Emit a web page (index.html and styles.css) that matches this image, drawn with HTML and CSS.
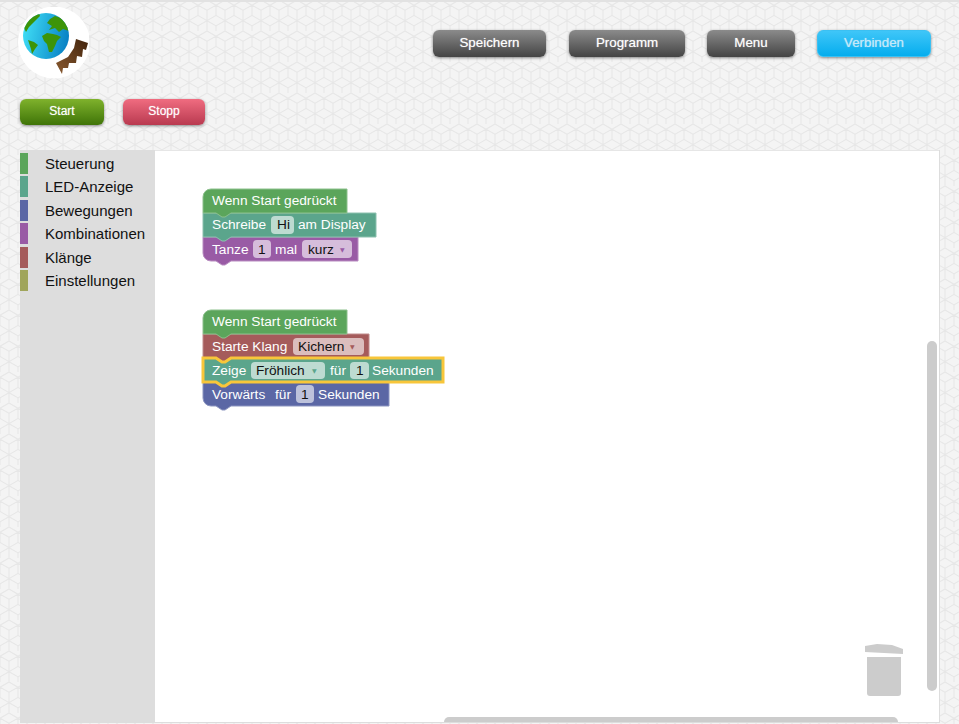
FILE: index.html
```html
<!DOCTYPE html>
<html lang="de">
<head>
    <meta charset="UTF-8">
    <meta name="viewport" content="width=device-width, initial-scale=1.0">
    <title>Blockly Programm</title>
    <link rel="stylesheet" href="styles.css">
</head>
<body>
<header class="top-bar">
    <div class="logo">
        <svg width="72" height="72" viewBox="0 0 72 72">
            <defs>
                <linearGradient id="globeFill" x1="0" y1="0.4" x2="1" y2="0.6">
                    <stop offset="0" stop-color="#3fdcf5"/>
                    <stop offset="1" stop-color="#0780c4"/>
                </linearGradient>
                <linearGradient id="gearFill" x1="0" y1="1" x2="1" y2="0">
                    <stop offset="0" stop-color="#8a5a30"/>
                    <stop offset="1" stop-color="#41230c"/>
                </linearGradient>
                <clipPath id="globeClip"><circle cx="29" cy="29" r="23"/></clipPath>
            </defs>
            <circle cx="37" cy="35.5" r="36" fill="#fff"/>
            <circle cx="29" cy="29" r="23" fill="url(#globeFill)"/>
            <g clip-path="url(#globeClip)" fill="#3d9408">
                <path d="M22 6 L16 8 L10 13 L7 21 L9 25 L12 20 L15 17 L19 13 L23 9 Z"/>
                <path d="M11 33 L17 35 L21 38 L18 42 L15 47 L14 42 Z"/>
                <path d="M33 12 L38 9 L44 11 L50 17 L52 24 L46 22 L42 25 L38 21 L32 23 L35 19 L30 16 Z"/>
                <path d="M25 29 L30 26 L36 27 L40 28 L44 30 L40 34 L38 39 L35 45 L32 45 L30 37 L27 34 Z"/>
            </g>
            <path class="logo-gear" d="M59 32 L71 36 L69 43 L66 42 L65 50 L60 49 L59 56 L52 56 L51 61 L46 61 L45 67 L39 56 L51 50 L57 41 Z"/>
        </svg>
    </div>
    <nav class="main-nav">
        <button class="btn btn-dark btn-save">Speichern</button>
        <button class="btn btn-dark btn-program">Programm</button>
        <button class="btn btn-dark btn-menu">Menu</button>
        <button class="btn btn-blue btn-connect">Verbinden</button>
    </nav>
</header>

<div class="run-bar">
    <button class="btn btn-small btn-green">Start</button>
    <button class="btn btn-small btn-red">Stopp</button>
</div>

<main class="workspace">
    <ul class="toolbox">
        <li><span class="swatch swatch-control"></span>Steuerung</li>
        <li><span class="swatch swatch-led"></span>LED-Anzeige</li>
        <li><span class="swatch swatch-move"></span>Bewegungen</li>
        <li><span class="swatch swatch-combo"></span>Kombinationen</li>
        <li><span class="swatch swatch-sound"></span>Klänge</li>
        <li><span class="swatch swatch-settings"></span>Einstellungen</li>
    </ul>
    <div class="canvas">
        <!-- blocks are drawn bottom-up so each tab sits over the block below it -->
        <svg class="blocks" width="784" height="571" viewBox="155 151 784 571">
            <g>
                <path class="block c-combo" d="M203 237 H358 V261 H231 l-6 4 h-3 l-6 -4 H211 a8 8 0 0 1 -8 -8 Z"/>
                <text class="label" x="212" y="254">Tanze</text>
                <rect class="field f-combo" x="253" y="240" width="18" height="18" rx="4"/>
                <text class="value" x="258" y="254">1</text>
                <text class="label" x="275" y="254">mal</text>
                <rect class="field f-combo" x="302" y="240" width="50" height="18" rx="4"/>
                <text class="value" x="308" y="254">kurz</text>
                <text class="arrow arrow-combo" x="340" y="252">▼</text>
            </g>
            <g>
                <path class="block c-led" d="M203 213 H376 V237 H231 l-6 4 h-3 l-6 -4 H203 Z"/>
                <text class="label" x="212" y="229">Schreibe</text>
                <rect class="field f-led" x="271" y="216" width="23" height="18" rx="4"/>
                <text class="value" x="277" y="229">Hi</text>
                <text class="label" x="298" y="229">am Display</text>
            </g>
            <g>
                <path class="block c-control" d="M203 197 a8 8 0 0 1 8 -8 H347 V213 H231 l-6 4 h-3 l-6 -4 H203 Z"/>
                <text class="label" x="212" y="205">Wenn Start gedrückt</text>
            </g>

            <g>
                <path class="block c-move" d="M203 382 H389 V406 H231 l-6 4 h-3 l-6 -4 H211 a8 8 0 0 1 -8 -8 Z"/>
                <text class="label" x="212" y="399">Vorwärts</text>
                <text class="label" x="275" y="399">für</text>
                <rect class="field f-move" x="296" y="385" width="18" height="18" rx="4"/>
                <text class="value" x="301" y="399">1</text>
                <text class="label" x="318" y="399">Sekunden</text>
            </g>
            <g>
                <path class="block c-sound" d="M203 334 H369 V358 H231 l-6 4 h-3 l-6 -4 H203 Z"/>
                <text class="label" x="212" y="351">Starte Klang</text>
                <rect class="field f-sound" x="293" y="338" width="71" height="17" rx="4"/>
                <text class="value" x="298" y="351">Kichern</text>
                <text class="arrow arrow-sound" x="350" y="349">▼</text>
            </g>
            <g>
                <path class="block c-control" d="M203 318 a8 8 0 0 1 8 -8 H347 V334 H231 l-6 4 h-3 l-6 -4 H203 Z"/>
                <text class="label" x="212" y="326">Wenn Start gedrückt</text>
            </g>
            <g>
                <path class="block c-led selected" d="M203 358 H216 l6 4 h3 l6 -4 H443 V382 H231 l-6 4 h-3 l-6 -4 H203 Z"/>
                <text class="label" x="212" y="375">Zeige</text>
                <rect class="field f-led" x="251" y="362" width="74" height="17" rx="4"/>
                <text class="value" x="256" y="375">Fröhlich</text>
                <text class="arrow arrow-led" x="312" y="373">▼</text>
                <text class="label" x="330" y="375">für</text>
                <rect class="field f-led" x="350" y="362" width="19" height="17" rx="4"/>
                <text class="value" x="356" y="375">1</text>
                <text class="label" x="372" y="375">Sekunden</text>
            </g>
        </svg>
        <svg class="trash" width="40" height="54" viewBox="0 0 40 54">
            <path d="M0 2 L12 0 L27 1 L38 5 V10 L0 8 Z"/>
            <path d="M2 13 H36 V49 Q36 52 33 52 H5 Q2 52 2 49 Z"/>
        </svg>
        <div class="scroll-v"></div>
        <div class="scroll-h"></div>
    </div>
</main>
</body>
</html>
```

FILE: styles.css
```css
body {
    font-family: "Liberation Sans", Arial, sans-serif;
    margin: 0;
    height: 724px;
    box-sizing: border-box;
    overflow: hidden;
    display: flex;
    flex-direction: column;
    border-top: 2px solid #e2e2e2;
    background-color: #f4f4f4;
    background-image: url("data:image/svg+xml,%3Csvg xmlns='http://www.w3.org/2000/svg' width='18' height='31' viewBox='0 0 26 45'%3E%3Cpath fill='none' stroke='%23e7e7e7' stroke-width='1.6' d='M13 0L26 7.5V22.5L13 30L0 22.5V7.5L13 0M13 15V30M13 15L0 7.5M13 15L26 7.5M13 30V45M13 30L26 37.5M13 30L0 37.5M0 37.5V45M26 37.5V45'/%3E%3C/svg%3E");
}

.top-bar {
    display: flex;
    justify-content: space-between;
    align-items: flex-start;
    box-sizing: border-box;
    height: 97px;
    padding: 5px 28px 0 17px;
    flex: none;
}

.logo {
    width: 72px;
    height: 72px;
}

.logo svg {
    display: block;
}

.logo-gear {
    fill: url(#gearFill);
}

.main-nav {
    display: flex;
    gap: 22px;
    margin-top: 23px;
}

.btn {
    font-family: inherit;
    color: #fff;
    border: none;
    padding: 0 0 2px;
    border-radius: 6px;
    cursor: pointer;
    height: 27px;
    font-size: 13.33px;
    text-shadow: 0 0 1px rgba(255, 255, 255, 0.6);
    box-shadow: 0 1px 3px rgba(0, 0, 0, 0.45);
}

.btn-dark {
    background: linear-gradient(#8b8b8b, #444);
}

.btn-blue {
    background: linear-gradient(#3fc6f8, #05adee);
    color: #c5e8f8;
    border: 1px solid #3bc0f2;
}

.btn-save { width: 113px; margin-right: 1px; }
.btn-program { width: 116px; }
.btn-menu { width: 88px; }
.btn-connect { width: 114px; }

.run-bar {
    display: flex;
    gap: 19px;
    padding-left: 20px;
    height: 51px;
    flex: none;
}

.btn-small {
    height: 26px;
    font-size: 12px;
}

.btn-green {
    width: 84px;
    background: linear-gradient(#7fb22c, #3f7408);
}

.btn-red {
    width: 82px;
    background: linear-gradient(#f06c80, #b93a50);
}

.workspace {
    display: flex;
    flex: none;
    height: 573px;
    box-sizing: border-box;
    margin: 0 19px 0 20px;
    background-color: #fff;
    border-bottom: 1px solid #ddd;
    border-right: 1px solid #ddd;
}

.toolbox {
    list-style: none;
    margin: 0;
    padding: 3px 0 0;
    width: 135px;
    flex: none;
    background-color: #ddd;
    font-size: 15px;
    color: #111;
}

.toolbox li {
    display: flex;
    align-items: center;
    height: 21px;
    margin-bottom: 2.4px;
}

.swatch {
    width: 8px;
    height: 21px;
    margin-right: 17px;
}

.swatch-control { background-color: #5ba55b; }
.swatch-led { background-color: #5ba58c; }
.swatch-move { background-color: #5b67a5; }
.swatch-combo { background-color: #995ba5; }
.swatch-sound { background-color: #a55b5b; }
.swatch-settings { background-color: #a0a55b; }

.canvas {
    position: relative;
    flex: 1;
    border-top: 1px solid #e6e6e6;
    overflow: hidden;
}

.blocks {
    position: absolute;
    left: 0;
    top: 0;
}

.block {
    stroke-width: 1;
}

.c-control { fill: #5ba55b; stroke: #8cc08c; }
.c-led { fill: #5ba58c; stroke: #8cc0ae; }
.c-move { fill: #5b67a5; stroke: #8c95c0; }
.c-combo { fill: #995ba5; stroke: #b88cc0; }
.c-sound { fill: #a55b5b; stroke: #c08c8c; }

.selected {
    stroke: #f8c63a;
    stroke-width: 3;
}

.label, .value {
    font-family: "Liberation Sans", Arial, sans-serif;
    font-size: 13.7px;
}

.label { fill: #fff; }
.value { fill: #111; }

.arrow { font-size: 6px; font-family: "DejaVu Sans", sans-serif; }
.arrow-combo { fill: #995ba5; }
.arrow-led { fill: #5ba58c; }
.arrow-sound { fill: #a55b5b; }

.f-combo { fill: #d6bddb; }
.f-led { fill: #bddbd1; }
.f-move { fill: #bdc2db; }
.f-sound { fill: #dbbdbd; }

.trash {
    position: absolute;
    right: 34px;
    bottom: 24px;
    fill: #ccc;
}

.scroll-v {
    position: absolute;
    left: 772px;
    top: 190px;
    width: 10px;
    height: 350px;
    border-radius: 5px;
    background-color: #ccc;
}

.scroll-h {
    position: absolute;
    left: 289px;
    bottom: 0;
    width: 454px;
    height: 5px;
    border-radius: 5px 5px 0 0;
    background-color: #ccc;
}
```
